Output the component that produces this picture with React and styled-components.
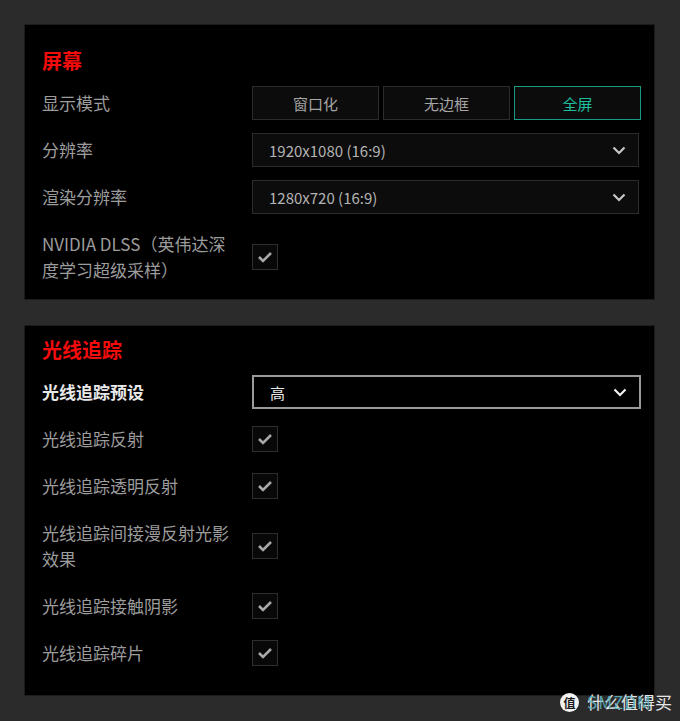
import styled, { createGlobalStyle } from 'styled-components'

const GlobalStyle = createGlobalStyle`
* { box-sizing: border-box; }
body {
    margin: 0;
    background: #2b2b2b;
    font-family: 'Noto Sans CJK SC', 'Noto Sans', sans-serif;
}
`

const Page = styled.div`
display: flex;
flex-direction: column;
gap: 25px;
padding: 24px;
min-height: 721px;
position: relative;
`

const Panel = styled.section`
width: 631px;
background: #000000;
border: 1px solid #1c1c1c;
padding: ${p => p.$top}px 14px ${p => p.$bottom}px 17px;
display: flex;
flex-direction: column;
gap: 13px;
`

const Title = styled.h2`
margin: 0 0 -1px;
font-size: 20px;
font-weight: 700;
line-height: 26px;
color: #f20c0c;
`

const Row = styled.div`
display: grid;
grid-template-columns: 210px 389px;
align-items: center;
min-height: ${p => p.$tall ? 60 : 34}px;
`

const Label = styled.div`
font-size: 17px;
line-height: 26px;
color: ${p => p.$strong ? '#e8e8e8' : '#9c9c9c'};
font-weight: ${p => p.$strong ? 700 : 400};
`

const Modes = styled.div`
display: grid;
grid-template-columns: repeat(3, 1fr);
gap: 4px;
`

const ModeButton = styled.button`
height: 34px;
background: #0c0c0c;
border: 1px solid ${p => p.$active ? '#1a9a83' : '#2c2c2c'};
color: ${p => p.$active ? '#1fbf9f' : '#a6a6a6'};
font-family: inherit;
font-size: 15px;
padding: 0;
`

const Select = styled.div`
display: flex;
align-items: center;
justify-content: space-between;
height: 34px;
width: ${p => p.$bright ? 389 : 387}px;
padding: 0 12px 0 16px;
background: ${p => p.$bright ? '#000000' : '#0c0c0c'};
border: ${p => p.$bright ? '2px solid #9a9a9a' : '1px solid #2c2c2c'};
color: ${p => p.$bright ? '#e8e8e8' : '#b4b4b4'};
font-size: 15px;
`

const Check = styled.div`
width: 26px;
height: 26px;
display: flex;
align-items: center;
justify-content: center;
background: #080808;
border: 1px solid #2e2e2e;
`

const Watermark = styled.div`
position: absolute;
right: 8px;
bottom: 9px;
display: flex;
align-items: center;
gap: 8px;
`

const Badge = styled.div`
width: 19px;
height: 19px;
border-radius: 50%;
background: #f2f2f2;
color: #1a1a1a;
font-size: 12px;
font-weight: 700;
display: flex;
align-items: center;
justify-content: center;
`

const Mark = styled.div`
position: relative;
font-size: 17px;
line-height: 20px;
color: #e6e6e6;
span {
    position: absolute;
    left: 0;
    top: 0;
    color: #5fb6c4;
    opacity: 0.85;
    letter-spacing: 1px;
}
`

const Chevron = ({ color = '#c8c8c8' }) => (
    <svg width="14" height="9" viewBox="0 0 14 9">
        <polyline points="1.5,1.5 7,7 12.5,1.5" fill="none" stroke={color} strokeWidth="2.2" />
    </svg>
)

const Tick = () => (
    <svg width="16" height="12" viewBox="0 0 16 12">
        <polyline points="2,6 6,10 14,2" fill="none" stroke="#a8a8a8" strokeWidth="2.6" />
    </svg>
)

const CheckRow = ({ label, tall }) => (
    <Row $tall={tall}>
        <Label>{label}</Label>
        <Check><Tick /></Check>
    </Row>
)

const App = () => {
    return (
        <Page>
            <GlobalStyle />
            <Panel $top={23} $bottom={12}>
                <Title>屏幕</Title>
                <Row>
                    <Label>显示模式</Label>
                    <Modes>
                        <ModeButton>窗口化</ModeButton>
                        <ModeButton>无边框</ModeButton>
                        <ModeButton $active>全屏</ModeButton>
                    </Modes>
                </Row>
                <Row>
                    <Label>分辨率</Label>
                    <Select>1920x1080 (16:9)<Chevron /></Select>
                </Row>
                <Row>
                    <Label>渲染分辨率</Label>
                    <Select>1280x720 (16:9)<Chevron /></Select>
                </Row>
                <CheckRow tall label={<>NVIDIA DLSS（英伟达深<br />度学习超级采样）</>} />
            </Panel>
            <Panel $top={11} $bottom={25}>
                <Title>光线追踪</Title>
                <Row>
                    <Label $strong>光线追踪预设</Label>
                    <Select $bright>高<Chevron color="#f0f0f0" /></Select>
                </Row>
                <CheckRow label="光线追踪反射" />
                <CheckRow label="光线追踪透明反射" />
                <CheckRow tall label={<>光线追踪间接漫反射光影<br />效果</>} />
                <CheckRow label="光线追踪接触阴影" />
                <CheckRow label="光线追踪碎片" />
            </Panel>
            <Watermark>
                <Badge>值</Badge>
                <Mark>什么值得买<span>SMZDM</span></Mark>
            </Watermark>
        </Page>
    )
}

export default App
